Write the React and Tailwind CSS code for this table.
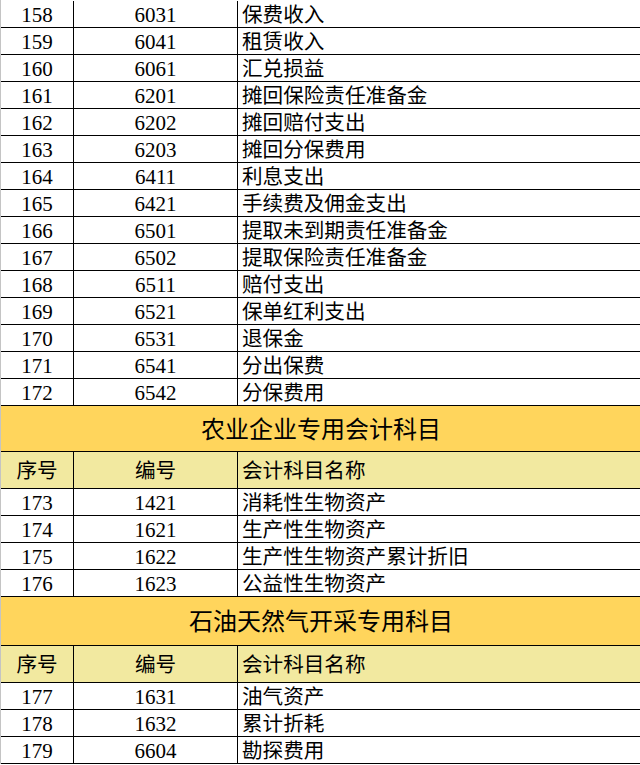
const top = [
  ["158", "6031", "保费收入"],
  ["159", "6041", "租赁收入"],
  ["160", "6061", "汇兑损益"],
  ["161", "6201", "摊回保险责任准备金"],
  ["162", "6202", "摊回赔付支出"],
  ["163", "6203", "摊回分保费用"],
  ["164", "6411", "利息支出"],
  ["165", "6421", "手续费及佣金支出"],
  ["166", "6501", "提取未到期责任准备金"],
  ["167", "6502", "提取保险责任准备金"],
  ["168", "6511", "赔付支出"],
  ["169", "6521", "保单红利支出"],
  ["170", "6531", "退保金"],
  ["171", "6541", "分出保费"],
  ["172", "6542", "分保费用"],
];

const farm = [
  ["173", "1421", "消耗性生物资产"],
  ["174", "1621", "生产性生物资产"],
  ["175", "1622", "生产性生物资产累计折旧"],
  ["176", "1623", "公益性生物资产"],
];

const oil = [
  ["177", "1631", "油气资产"],
  ["178", "1632", "累计折耗"],
  ["179", "6604", "勘探费用"],
];

const font = { fontFamily: '"Liberation Serif", "Noto Sans CJK SC", serif' };

function Row({ no, code, name }) {
  return (
    <div className="flex h-[27px] border-b border-black leading-none">
      <div className="w-[73px] shrink-0 border-r border-black flex items-center justify-center pt-[3px] text-[21px]">
        {no}
      </div>
      <div className="w-[164px] shrink-0 border-r border-black flex items-center justify-center pt-[3px] text-[21px]">
        {code}
      </div>
      <div className="flex-1 flex items-center pl-[4px] pt-[2px] text-[20.6px]">{name}</div>
    </div>
  );
}

function Section({ title, height }) {
  return (
    <>
      <div
        className={`${height} flex items-center justify-center pt-[2px] bg-[#ffd55c] border-b border-black text-[24px] w-[640px]`}
      >
        {title}
      </div>
      <div className="flex h-[37px] border-b border-black bg-[#f2e9a0] text-[20.6px] leading-none">
        <div className="w-[73px] shrink-0 border-r border-black flex items-center justify-center pt-[2px]">
          序号
        </div>
        <div className="w-[164px] shrink-0 border-r border-black flex items-center justify-center pt-[2px]">
          编号
        </div>
        <div className="flex-1 flex items-center pl-[4px] pt-[2px]">会计科目名称</div>
      </div>
    </>
  );
}

export default function App() {
  return (
    <div className="w-[640px] h-[765px] overflow-hidden bg-white text-black" style={font}>
      <div className="w-[660px] pt-[1px] border-l border-[#c4c4c4]">
        {top.map((r) => (
          <Row key={r[0]} no={r[0]} code={r[1]} name={r[2]} />
        ))}
        <Section title="农业企业专用会计科目" height="h-[46px]" />
        {farm.map((r) => (
          <Row key={r[0]} no={r[0]} code={r[1]} name={r[2]} />
        ))}
        <Section title="石油天然气开采专用科目" height="h-[49px]" />
        {oil.map((r) => (
          <Row key={r[0]} no={r[0]} code={r[1]} name={r[2]} />
        ))}
      </div>
    </div>
  );
}
